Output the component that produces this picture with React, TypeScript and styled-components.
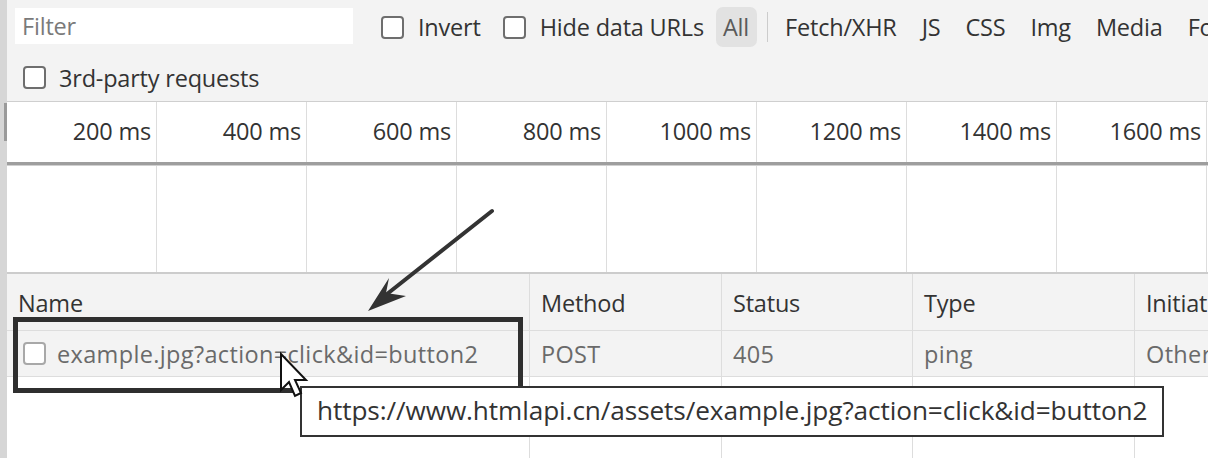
import React from "react";
import styled, { createGlobalStyle } from "styled-components";

const Global = createGlobalStyle`
  html, body { margin: 0; padding: 0; background: #ffffff; }
  body { font-family: "Open Sans", "Noto Sans", sans-serif; }
`;

const Frame = styled.div`
  position: relative;
  width: 1208px;
  height: 458px;
  overflow: hidden;
  display: flex;
  background: #ffffff;
  font-family: "Open Sans", "Noto Sans", sans-serif;
  font-size: 23.5px;
  letter-spacing: -0.2px;
  color: #333333;
`;

const Gutter = styled.div`
  width: 7px;
  flex: none;
  background: #d6d6d6;
  display: flex;
  flex-direction: column;
  align-items: flex-end;
  padding-top: 103px;
  box-sizing: border-box;
`;

const GutterThumb = styled.div`
  width: 3px;
  height: 38px;
  background: #9a9a9a;
`;

const Panel = styled.div`
  flex: 1;
  min-width: 0;
  display: flex;
  flex-direction: column;
`;

const Toolbar = styled.div`
  height: 102px;
  box-sizing: border-box;
  background: #f3f3f3;
  border-bottom: 1px solid #cfcfcf;
  display: flex;
  flex-direction: column;
`;

const ToolRow = styled.div<{ $h: number; $pl: number }>`
  height: ${(p) => p.$h}px;
  display: flex;
  align-items: center;
  padding-left: ${(p) => p.$pl}px;
  white-space: nowrap;
  overflow: hidden;
`;

const FilterBox = styled.div`
  width: 338px;
  height: 36px;
  flex: none;
  background: #ffffff;
  display: flex;
  align-items: center;
  padding-left: 7px;
  box-sizing: border-box;
  color: #7a7a7a;
  margin-right: 28px;
  margin-top: -2px;
`;

const Check = styled.label<{ $gap: number; $mr: number }>`
  display: flex;
  flex: none;
  align-items: center;
  gap: ${(p) => p.$gap}px;
  margin-right: ${(p) => p.$mr}px;
  color: #333333;
`;

const Box = styled.span<{ $light?: boolean }>`
  width: 19px;
  height: 19px;
  border: 2px solid ${(p) => (p.$light ? "#a8a8a8" : "#6e6e6e")};
  border-radius: 4px;
  background: #ffffff;
  flex: none;
`;

const AllButton = styled.div`
  height: 40px;
  flex: none;
  padding: 0 8px 0 7px;
  display: flex;
  align-items: center;
  background: #e2e2e2;
  border-radius: 7px;
  color: #5a5a5a;
`;

const Sep = styled.div`
  width: 1px;
  height: 30px;
  flex: none;
  background: #cccccc;
  margin: 0 17px 0 10px;
`;

const TypeButton = styled.div`
  padding-right: 25px;
  flex: none;
  color: #333333;
`;

const GridRow = styled.div<{ $h: number }>`
  height: ${(p) => p.$h}px;
  display: flex;
  background: #ffffff;
  flex: none;
`;

const TickCell = styled.div`
  width: 150px;
  flex: none;
  box-sizing: border-box;
  border-right: 1px solid #dddddd;
  display: flex;
  align-items: center;
  justify-content: flex-end;
  padding-right: 5px;
  padding-bottom: 2px;
  color: #333333;
  white-space: nowrap;
`;

const HeavyRule = styled.div`
  height: 4px;
  flex: none;
  background: #9e9e9e;
  border-bottom: 1px solid #d0d0d0;
  box-sizing: border-box;
`;

const LightRule = styled.div`
  height: 2px;
  flex: none;
  background: #cccccc;
`;

const TableRow = styled.div<{ $h: number; $bg: string; $ls?: number }>`
  height: ${(p) => p.$h}px;
  display: flex;
  background: ${(p) => p.$bg};
  border-bottom: 1px solid #dddddd;
  box-sizing: border-box;
  flex: none;
  letter-spacing: ${(p) => p.$ls ?? -0.2}px;
`;

const Filler = styled.div`
  flex: 1;
  display: flex;
  background: #ffffff;
`;

const Cell = styled.div<{ $w: number; $color?: string; $pt?: number }>`
  width: ${(p) => p.$w}px;
  flex: none;
  box-sizing: border-box;
  border-right: 1px solid #dddddd;
  display: flex;
  align-items: center;
  gap: 11px;
  padding-left: 11px;
  padding-top: ${(p) => p.$pt ?? 0}px;
  white-space: nowrap;
  overflow: hidden;
  color: ${(p) => p.$color ?? "#333333"};
`;

const NameCell = styled(Cell)`
  padding-left: 16px;
`;

const Highlight = styled.div`
  position: absolute;
  left: 13px;
  top: 317px;
  width: 510px;
  height: 76px;
  box-sizing: border-box;
  border: 5px solid #2f2f2f;
  pointer-events: none;
`;

const Tooltip = styled.div`
  position: absolute;
  left: 300px;
  top: 386px;
  width: 864px;
  height: 51px;
  box-sizing: border-box;
  border: 2px solid #333333;
  background: #ffffff;
  display: flex;
  align-items: center;
  padding-left: 15px;
  padding-bottom: 3px;
  font-size: 26.2px;
  letter-spacing: -0.1px;
  color: #333333;
  white-space: nowrap;
`;

const Overlay = styled.svg`
  position: absolute;
  left: 0;
  top: 0;
  pointer-events: none;
`;

const ticks = ["200 ms", "400 ms", "600 ms", "800 ms", "1000 ms", "1200 ms", "1400 ms", "1600 ms"];
const cols = [
  { w: 523, head: "Name", val: "" },
  { w: 192, head: "Method", val: "POST" },
  { w: 191, head: "Status", val: "405" },
  { w: 222, head: "Type", val: "ping" },
  { w: 200, head: "Initiator", val: "Other" },
];

function Grid({ h, labels }: { h: number; labels?: string[] }) {
  return (
    <GridRow $h={h}>
      {ticks.map((t, i) => (
        <TickCell key={i}>{labels ? labels[i] : ""}</TickCell>
      ))}
    </GridRow>
  );
}

export default function App() {
  return (
    <>
      <Global />
      <Frame>
        <Gutter>
          <GutterThumb />
        </Gutter>
        <Panel>
          <Toolbar>
            <ToolRow $h={54} $pl={8}>
              <FilterBox>Filter</FilterBox>
              <Check $gap={14} $mr={22}>
                <Box />
                Invert
              </Check>
              <Check $gap={14} $mr={12}>
                <Box />
                Hide data URLs
              </Check>
              <AllButton>All</AllButton>
              <Sep />
              {["Fetch/XHR", "JS", "CSS", "Img", "Media", "Font"].map((t) => (
                <TypeButton key={t}>{t}</TypeButton>
              ))}
            </ToolRow>
            <ToolRow $h={47} $pl={16}>
              <Check $gap={13} $mr={0}>
                <Box />
                3rd-party requests
              </Check>
            </ToolRow>
          </Toolbar>
          <Grid h={60} labels={ticks} />
          <HeavyRule />
          <Grid h={106} />
          <LightRule />
          <TableRow $h={57} $bg="#f3f3f3">
            {cols.map((c, i) => (
              <Cell key={i} $w={c.w} $pt={2}>
                {c.head}
              </Cell>
            ))}
          </TableRow>
          <TableRow $h={46} $bg="#f3f3f3" $ls={0.35}>
            {cols.map((c, i) =>
              i === 0 ? (
                <NameCell key={i} $w={c.w} $color="#6a6a6a">
                  <Box $light />
                  example.jpg?action=click&amp;id=button2
                </NameCell>
              ) : (
                <Cell key={i} $w={c.w} $color="#6a6a6a">
                  {c.val}
                </Cell>
              )
            )}
          </TableRow>
          <Filler>
            {cols.map((c, i) => (
              <Cell key={i} $w={c.w} />
            ))}
          </Filler>
        </Panel>

        <Highlight />
        <Tooltip>https://www.htmlapi.cn/assets/example.jpg?action=click&amp;id=button2</Tooltip>

        <Overlay width="1208" height="458" viewBox="0 0 1208 458">
          <line x1="492" y1="211" x2="382" y2="298" stroke="#333333" strokeWidth="4" strokeLinecap="round" />
          <path d="M368 311 L389 278 L386 293 L406 296 Z" fill="#333333" />
          <path
            d="M281 354 L281 390 L289 382 L295 396 L301 393 L295 380 L306 380 Z"
            fill="#ffffff"
            stroke="#111111"
            strokeWidth="2"
            strokeLinejoin="miter"
          />
        </Overlay>
      </Frame>
    </>
  );
}
